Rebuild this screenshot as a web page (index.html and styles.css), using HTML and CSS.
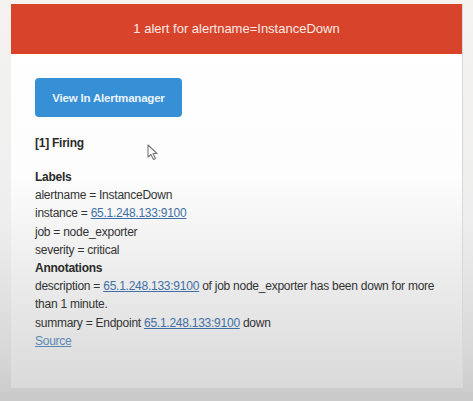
FILE: index.html
```html
<!DOCTYPE html>
<html>
<head>
<meta charset="utf-8">
<link rel="stylesheet" href="styles.css">
</head>
<body>
<div class="card">
  <div class="header">1 alert for alertname=InstanceDown</div>
  <div class="content">
    <a class="btn" href="#">View In Alertmanager</a>
    <div class="firing">[1] Firing</div>
    <div class="section">
      <div class="title">Labels</div>
      <div class="line">alertname = InstanceDown</div>
      <div class="line">instance = <a class="link" href="#">65.1.248.133:9100</a></div>
      <div class="line">job = node_exporter</div>
      <div class="line">severity = critical</div>
      <div class="title">Annotations</div>
      <div class="line">description = <a class="link" href="#">65.1.248.133:9100</a> of job node_exporter has been down for more than 1 minute.</div>
      <div class="line">summary = Endpoint <a class="link" href="#">65.1.248.133:9100</a> down</div>
      <div class="line"><a class="link source" href="#">Source</a></div>
    </div>
  </div>
  <svg class="cursor" width="12" height="17" viewBox="0 0 12 17"><path d="M1 1 L1 13 L4 10.5 L6.5 15.5 L8.5 14.5 L6 9.5 L10 9.5 Z" fill="#fff" stroke="#777" stroke-width="1.1" stroke-linejoin="round"/></svg>
</div>
</body>
</html>
```
FILE: styles.css
```css
html, body {
  margin: 0;
  height: 100%;
}
body {
  padding: 4px 11px 0 11px;
  box-sizing: border-box;
  background: linear-gradient(#f4f3f0 0%, #eeeeee 55%, #d6d6d6 90%, #c9c9c9 100%);
  font-family: "Liberation Sans", Arial, sans-serif;
  overflow: hidden;
}
.card {
  position: relative;
  width: 451px;
  height: 384px;
  background: linear-gradient(#ffffff 0%, #fdfdfd 45%, #e6e6e6 80%, #dadada 100%);
  box-shadow: 1px 0 0 #d8d8d8;
}
.header {
  height: 50px;
  background: #d7432b;
  color: #fbe9e5;
  font-size: 13px;
  display: flex;
  align-items: center;
  justify-content: center;
  padding-bottom: 1px;
  box-sizing: border-box;
}
.content {
  padding: 24px 24px 0 24px;
  color: #333;
  font-size: 12px;
  letter-spacing: -0.25px;
}
.btn {
  display: inline-flex;
  align-items: center;
  justify-content: center;
  width: 147px;
  height: 39px;
  border-radius: 4px;
  background: #3790d6;
  color: #eaf3fb;
  font-weight: bold;
  font-size: 11.5px;
  letter-spacing: -0.2px;
  text-decoration: none;
}
.firing {
  margin-top: 17px;
  line-height: 18px;
  font-weight: bold;
  color: #2a2a2a;
}
.section {
  margin-top: 16px;
  line-height: 18.2px;
}
.title {
  font-weight: bold;
  color: #2a2a2a;
}
.link {
  color: #3f6fa6;
  text-decoration: underline;
}
.source {
  color: #5a88b4;
}
.cursor {
  position: absolute;
  left: 136px;
  top: 140px;
}
```
